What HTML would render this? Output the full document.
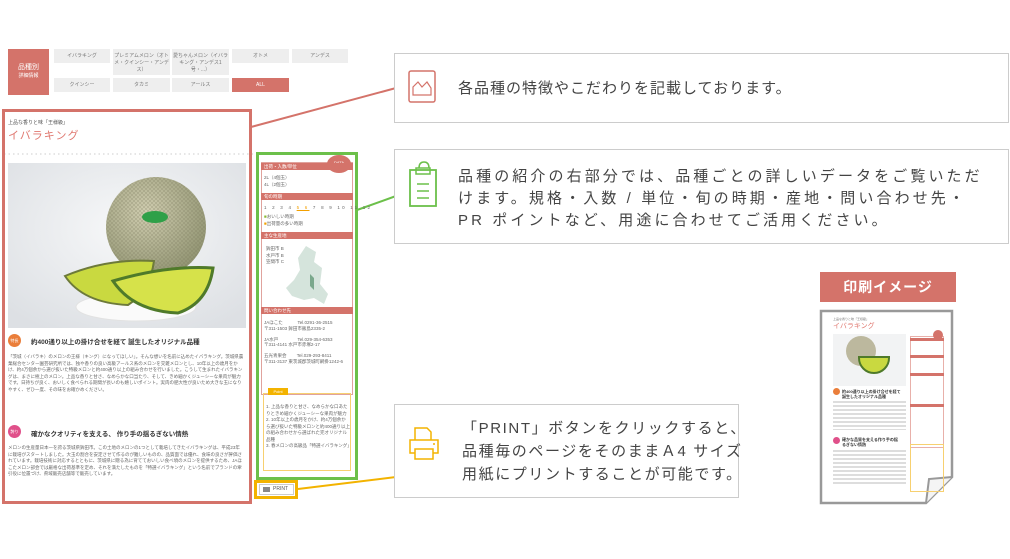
<!DOCTYPE html>
<html><head><meta charset="utf-8"><style>
*{margin:0;padding:0;box-sizing:border-box}
body{width:1010px;height:559px;background:#fff;position:relative;overflow:hidden;font-family:"Liberation Sans","Noto Sans CJK JP",sans-serif;color:#444}
.a{position:absolute}
.tab{position:absolute;background:#eee;font-size:5px;color:#777;text-align:center;padding-top:4px;line-height:7px}
.cb{position:absolute;border:1px solid #ccc;background:#fff}
.cb p{position:absolute;font-size:15px;color:#444;white-space:nowrap;line-height:22px}
.sm{font-size:4.5px;line-height:6.5px;color:#666}
.hd{background:#d4736a;color:#fff;font-size:4.5px;height:7px;line-height:7px;padding-left:3px}
</style></head><body>
<div class="a" style="left:8px;top:49px;width:41px;height:46px;background:#d4736a;color:#fff;font-size:7px;text-align:center;padding-top:15px;line-height:8px">品種別<br><span style="font-size:5px">詳細情報</span></div>
<div class="tab" style="left:54px;top:49px;width:56px;height:14px">イバラキング</div>
<div class="tab" style="left:113px;top:49px;width:57px;height:26px">プレミアムメロン（オトメ・クインシー・アンデス）</div>
<div class="tab" style="left:172px;top:49px;width:57px;height:26px">愛ちゃんメロン（イバラキング・アンデス1号・...）</div>
<div class="tab" style="left:232px;top:49px;width:57px;height:14px">オトメ</div>
<div class="tab" style="left:292px;top:49px;width:56px;height:14px">アンデス</div>
<div class="tab" style="left:54px;top:78px;width:56px;height:14px">クインシー</div>
<div class="tab" style="left:113px;top:78px;width:57px;height:14px">タカミ</div>
<div class="tab" style="left:172px;top:78px;width:57px;height:14px">アールス</div>
<div class="tab" style="left:232px;top:78px;width:57px;height:14px;background:#d4736a;color:#fff">ALL</div>

<svg class="a" style="left:0;top:0" width="1010" height="559">
<line x1="251" y1="127" x2="396" y2="88" stroke="#d4736a" stroke-width="2"/>
<line x1="357" y1="210" x2="396" y2="196" stroke="#6cc04a" stroke-width="2"/>
<line x1="298" y1="489" x2="396" y2="477" stroke="#f3b300" stroke-width="2"/>
<line x1="4" y1="154" x2="356" y2="154" stroke="#ccc" stroke-width="1" stroke-dasharray="1.5 3"/>
</svg>

<div class="a" style="left:2px;top:109px;width:250px;height:395px;border:3px solid #d4736a"></div>
<div class="a" style="left:8px;top:119px;font-size:5px;color:#555">上品な香りと味「王様級」</div>
<div class="a" style="left:8px;top:127px;font-size:11px;color:#e07870;letter-spacing:1px">イバラキング</div>
<svg class="a" style="left:8px;top:163px" width="238" height="165">
<defs><radialGradient id="bg" cx="0.5" cy="0.4" r="0.7"><stop offset="0" stop-color="#f7f8f9"/><stop offset="1" stop-color="#dde0e4"/></radialGradient>
<radialGradient id="ml" cx="0.4" cy="0.35" r="0.7"><stop offset="0" stop-color="#d0cdb0"/><stop offset="1" stop-color="#8f9270"/></radialGradient>
<pattern id="net" width="4" height="4" patternUnits="userSpaceOnUse"><path d="M0 0L4 4M4 0L0 4" stroke="#7b7a5e" stroke-width="0.5" opacity="0.5"/></pattern></defs>
<rect width="238" height="165" fill="url(#bg)"/>
<ellipse cx="128" cy="144" rx="60" ry="14" fill="#fafafa" stroke="#e2e2e2"/>
<circle cx="148" cy="64" r="50" fill="url(#ml)"/>
<circle cx="148" cy="64" r="50" fill="url(#net)"/>
<ellipse cx="147" cy="54" rx="13" ry="6" fill="#2fa048"/>
<path d="M57 113 Q100 95 146 98 Q142 128 120 142 Q75 140 57 113Z" fill="#c9d940" stroke="#6d7a3a" stroke-width="2"/>
<path d="M105 118 Q160 102 205 105 Q200 140 170 150 Q125 148 105 118Z" fill="#d6e24a" stroke="#4f7a2a" stroke-width="3"/>
</svg>
<div class="a" style="left:8px;top:334px;width:13px;height:13px;border-radius:50%;background:#ea7e3a;color:#fff;font-size:4px;text-align:center;line-height:13px">特長</div>
<div class="a" style="left:31px;top:336px;font-size:6.5px;color:#333;font-weight:bold">約400通り以上の掛け合せを経て 誕生したオリジナル品種</div>
<div class="a sm" style="left:8px;top:354px;width:236px">「茨城（イバラキ）のメロンの王様（キング）になってほしい」。そんな想いを名前に込めたイバラキング。茨城県農業総合センター園芸研究所では、独や香りの良い高級アールス系のメロンを交雑メロンとし、10年以上の歳月をかけ、約4万個余から選び抜いた特級メロンと約400通り以上の組み合わせを行いました。こうして生まれたイバラキングは、まさに極上のメロン。上品な香りと甘さ、なめらかな口当たり、そして、きめ細かくジューシーな果肉が魅力です。日持ちが良く、おいしく食べられる期間が長いのも嬉しいポイント。実肉の肥大性が良いため大きな玉になりやすく、ぜひ一度、その味をお確かめください。</div>
<div class="a" style="left:8px;top:425px;width:13px;height:13px;border-radius:50%;background:#e0508a;color:#fff;font-size:4px;text-align:center;line-height:13px">誇り</div>
<div class="a" style="left:31px;top:428px;font-size:6.5px;color:#333;font-weight:bold">確かなクオリティを支える、 作り手の揺るぎない情熱</div>
<div class="a sm" style="left:8px;top:445px;width:236px">メロンの生産量日本一を誇る茨城県鉾田市。この土地のメロンの1つとして栽培してきたイバラキングは、平成23年に栽培がスタートしました。大玉の割合を安定させて作るのが難しいものの、品質面では優れ、食味の良さが評価されています。栽培技術に対応するとともに、茨城県に贈る為に育てておいしい食べ頃のメロンを提供するため、JAほこたメロン部会では厳格な出荷基準を定め、それを満たしたものを「特選イバラキング」という名前でブランドの牽引役に位置づけ、県域販売店舗等で販売しています。</div>

<div class="a" style="left:256px;top:152px;width:102px;height:328px;border:3px solid #6cc04a"></div>
<div class="a" style="left:261px;top:162px;width:92px;height:233px;border:1px solid #e0a39d"></div>
<div class="a" style="left:327px;top:155px;width:24px;height:18px;border-radius:50%;background:#d4736a;color:#fff;font-size:4px;text-align:center;line-height:16px">DATA</div>
<div class="a hd" style="left:261px;top:163px;width:92px">出荷・入数/単位</div>
<div class="a sm" style="left:264px;top:175px">2L（4個玉）<br>4L（2個玉）</div>
<div class="a hd" style="left:261px;top:193px;width:92px">旬の時期</div>
<div class="a sm" style="left:264px;top:205px;letter-spacing:2.2px">1 2 3 4 <u style="color:#f3a000">5 6</u> 7 8 9 10 11 12</div>
<div class="a sm" style="left:264px;top:214px"><span style="color:#8ab830">■</span>おいしい時期<br><span style="color:#f3a000">■</span>出荷量の多い時期</div>
<div class="a hd" style="left:261px;top:232px;width:92px">主な生産地</div>
<div class="a sm" style="left:266px;top:246px">鉾田市 B<br>水戸市 B<br>笠間市 C</div>
<svg class="a" style="left:284px;top:244px" width="50" height="62"><path d="M22 2 L32 8 L30 18 L38 24 L36 40 L44 50 L40 60 L30 54 L20 56 L8 52 L2 44 L10 36 L16 26 L14 14Z" fill="#d5e4dc"/><path d="M26 30 L30 34 L30 46 L26 42Z" fill="#7aa88c"/></svg>
<div class="a hd" style="left:261px;top:307px;width:92px">問い合わせ先</div>
<div class="a sm" style="left:264px;top:320px;width:87px;line-height:5.5px">JAほこた　　　 Tel.0291-36-2515<br>〒311-1503 鉾田市飯島2335-2<br><br>JA水戸　　　　 Tel.029-354-6353<br>〒311-4141 水戸市赤塚2-17<br><br>五光青果会　　 Tel.029-293-8411<br>〒311-3137 東茨城郡茨城町網掛1242-6</div>
<div class="a" style="left:263px;top:393px;width:88px;height:78px;border:1px solid #f7d070"></div>
<div class="a" style="left:268px;top:388px;width:20px;height:7px;background:#f3b300;color:#fff;font-size:4px;text-align:center;line-height:7px">Point</div>
<div class="a sm" style="left:266px;top:404px;width:84px">1. 上品な香りと甘さ、なめらかな口あたりときめ細かくジューシーな果肉が魅力<br>2. 10年以上の歳月をかけ、約4万個余から選び抜いた特級メロンと約400通り以上の組み合わせから選ばれた完オリジナル品種<br>3. 春メロンの高級品「特選イバラキング」</div>
<div class="a" style="left:254px;top:480px;width:44px;height:19px;border:3px solid #f3b300"></div>
<div class="a" style="left:259px;top:484px;width:35px;height:11px;border:1px solid #ccc;font-size:5px;color:#555;line-height:9px;padding-left:13px">PRINT</div>
<div class="a" style="left:263px;top:487px;width:7px;height:5px;background:#888"></div>

<div class="cb" style="left:394px;top:53px;width:615px;height:70px">
<svg class="a" style="left:13px;top:16px" width="29" height="33"><rect x="1" y="1" width="26" height="31" rx="2" fill="none" stroke="#d4736a" stroke-width="1.5"/><path d="M5 25 L5 17 L10 12 L14 17 L19 12 L23 18 L23 25Z" fill="none" stroke="#d4736a" stroke-width="1.2"/></svg>
<p style="left:63px;top:24px;letter-spacing:1px">各品種の特徴やこだわりを記載しております。</p></div>
<div class="cb" style="left:394px;top:149px;width:615px;height:95px">
<svg class="a" style="left:14px;top:10px" width="30" height="48"><path d="M10 8 Q10 2 15 2 Q20 2 20 8" fill="none" stroke="#6cc04a" stroke-width="1.5"/><rect x="1" y="10" width="26" height="36" fill="none" stroke="#6cc04a" stroke-width="1.8"/><rect x="7" y="8" width="14" height="6" fill="none" stroke="#6cc04a" stroke-width="1.5"/><path d="M8 24h12M8 31h12M8 38h12" stroke="#6cc04a" stroke-width="1.5"/></svg>
<p style="left:63px;top:16px;letter-spacing:3.1px">品種の紹介の右部分では、品種ごとの詳しいデータをご覧いただ<br>けます。規格・入数 / 単位・旬の時期・産地・問い合わせ先・<br>PR ポイントなど、用途に合わせてご活用ください。</p></div>
<div class="cb" style="left:394px;top:404px;width:345px;height:94px">
<svg class="a" style="left:14px;top:21px" width="30" height="34"><path d="M6 14 V2 H18 L22 6 V14" fill="none" stroke="#f3b300" stroke-width="1.5"/><rect x="1" y="14" width="28" height="13" fill="none" stroke="#f3b300" stroke-width="1.5"/><rect x="6" y="23" width="18" height="10" fill="#fff" stroke="#f3b300" stroke-width="1.5"/><circle cx="25" cy="18" r="1" fill="#f3b300"/></svg>
<p style="left:67px;top:12px;line-height:23px;letter-spacing:1.6px">「PRINT」ボタンをクリックすると、<br>品種毎のページをそのままＡ4 サイズ<br>用紙にプリントすることが可能です。</p></div>

<div class="a" style="left:820px;top:272px;width:136px;height:30px;background:#d4736a;color:#fff;font-size:14px;font-weight:bold;text-align:center;line-height:30px;letter-spacing:1px">印刷イメージ</div>
<svg class="a" style="left:819px;top:309px" width="136" height="196"><path d="M2 2 H133 V168 L107 194 H2Z" fill="#fff" stroke="#999" stroke-width="2.5"/><path d="M133 168 L110 170 L107 194" fill="#f4f4f4" stroke="#999" stroke-width="2"/></svg>
<div class="a" style="left:833px;top:317px;font-size:3px;color:#777">上品な香りと味「王様級」</div>
<div class="a" style="left:833px;top:321px;font-size:7px;color:#e07870">イバラキング</div>
<div class="a" style="left:833px;top:334px;width:73px;height:52px;background:#f2f3f4"></div>
<div class="a" style="left:846px;top:336px;width:30px;height:30px;border-radius:50%;background:#bcb89e"></div>
<div class="a" style="left:858px;top:356px;width:32px;height:18px;border-radius:0 0 16px 16px;background:#c9d940;border:2px solid #4f7a2a"></div>
<div class="a" style="left:910px;top:336px;width:34px;height:112px;border:1px solid #e8b0aa"></div>
<div class="a" style="left:910px;top:338px;width:34px;height:3px;background:#d4736a"></div>
<div class="a" style="left:933px;top:330px;width:10px;height:10px;border-radius:50%;background:#d4736a"></div>
<div class="a" style="left:910px;top:355px;width:34px;height:3px;background:#d4736a"></div>
<div class="a" style="left:910px;top:373px;width:34px;height:3px;background:#d4736a"></div>
<div class="a" style="left:910px;top:404px;width:34px;height:3px;background:#d4736a"></div>
<div class="a" style="left:910px;top:444px;width:34px;height:48px;border:1px solid #f7d070"></div>
<div class="a" style="left:833px;top:388px;width:7px;height:7px;border-radius:50%;background:#ea7e3a"></div>
<div class="a" style="left:842px;top:389px;font-size:4px;color:#333;font-weight:bold;line-height:5px">約400通り以上の掛け合せを経て<br>誕生したオリジナル品種</div>
<div class="a" style="left:833px;top:400px;width:73px;height:30px;background:repeating-linear-gradient(#fff 0 1.5px,#bbb 1.5px 2.6px,#fff 2.6px 4px)"></div>
<div class="a" style="left:833px;top:437px;width:7px;height:7px;border-radius:50%;background:#e0508a"></div>
<div class="a" style="left:842px;top:437px;font-size:4px;color:#333;font-weight:bold;line-height:5px">確かな品質を支える作り手の揺<br>るぎない情熱</div>
<div class="a" style="left:833px;top:449px;width:73px;height:36px;background:repeating-linear-gradient(#fff 0 1.5px,#bbb 1.5px 2.6px,#fff 2.6px 4px)"></div>
</body></html>
